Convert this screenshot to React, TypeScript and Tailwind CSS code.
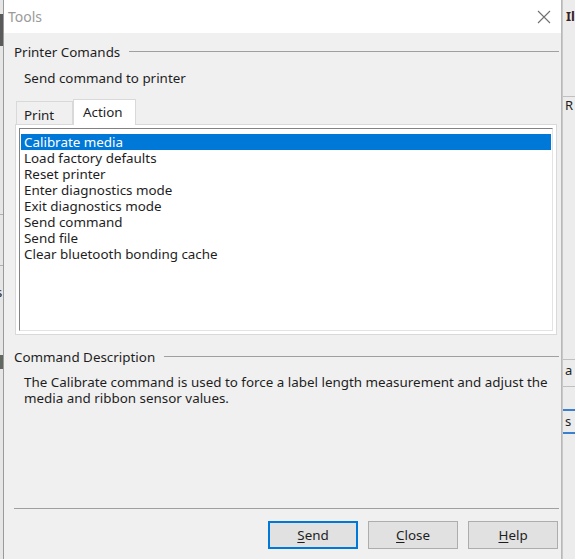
import React from "react";

const actions = [
  "Calibrate media",
  "Load factory defaults",
  "Reset printer",
  "Enter diagnostics mode",
  "Exit diagnostics mode",
  "Send command",
  "Send file",
  "Clear bluetooth bonding cache",
];

const GroupLabel: React.FC<{ label: string }> = ({ label }) => (
  <div className="flex items-center h-[18px]">
    <span className="text-[13.4px] text-[#1e1e1e]">{label}</span>
    <div className="flex-1 ml-[9px] h-[2px] border-t border-[#a0a0a0] border-b-white" />
  </div>
);

const DlgButton: React.FC<{ label: string; accel: string; primary?: boolean }> = ({
  label,
  accel,
  primary,
}) => (
  <button
    className={
      "w-[90px] h-[28px] bg-[#e1e1e1] text-[13.4px] text-[#1e1e1e] " +
      (primary ? "border-2 border-[#0078d7]" : "border border-[#adadad]")
    }
  >
    <span className="underline underline-offset-2">{accel}</span>
    {label.slice(1)}
  </button>
);

export default function App() {
  return (
    <div
      className="w-[575px] h-[559px] flex bg-[#f0f0f0] overflow-hidden"
      style={{ fontFamily: '"Noto Sans", "Open Sans", sans-serif' }}
    >
      {/* left edge of the window behind */}
      <div className="w-[4px] flex flex-col bg-[#e6e6e6] border-r border-[#9a9a9a] text-[13px] leading-none">
        <div className="h-[14px]" />
        <div className="h-[32px] bg-[#5a5a5a] w-[3px]" />
        <div className="h-[168px]" />
        <div className="h-px bg-[#b0b0b0]" />
        <div className="h-[50px]" />
        <div className="h-px bg-[#b0b0b0]" />
        <div className="h-[20px]" />
        <div className="-ml-[4px] text-[#1e1e1e]">s</div>
        <div className="h-[56px]" />
        <div className="h-[14px] bg-[#606860]" />
      </div>

      {/* dialog */}
      <div className="w-[562px] flex flex-col border-r border-[#b8b8b8]">
        <div className="h-[33px] bg-white flex items-center justify-between pl-[4px] pr-[10px]">
          <span className="text-[14px] text-[#9a9a9a]">Tools</span>
          <svg width="14" height="14" viewBox="0 0 14 14" stroke="#707070" strokeWidth="1.1">
            <path d="M1 1 L13 13 M13 1 L1 13" />
          </svg>
        </div>

        <div className="flex-1 flex flex-col pl-[10px] pr-[2px] pt-[10px]">
          <GroupLabel label="Printer Comands" />
          <div className="text-[13.4px] text-[#1e1e1e] pl-[10px] mt-[6px] h-[20px] leading-[22px]">
            Send command to printer
          </div>

          {/* tabs */}
          <div className="mt-[11px] flex items-end h-[26px] pl-[2px]">
            <div className="w-[57px] h-[23px] border border-b-0 border-[#d9d9d9] bg-[#f0f0f0] text-[13.4px] text-[#1e1e1e] pl-[7px] pt-[3px]">
              Print
            </div>
            <div className="w-[63px] h-[26px] border border-b-0 border-[#d9d9d9] bg-white text-[13.4px] text-[#1e1e1e] pl-[9px] pt-[2px] -mb-px z-10">
              Action
            </div>
          </div>
          <div className="ml-[1px] mr-[2px] h-[211px] bg-white border border-[#d9d9d9] p-[3px]">
            <div className="h-full border border-t-[#828282] border-l-[#828282] border-r-[#e3e3e3] border-b-[#e3e3e3] pt-[5px] pl-px pr-px">
              {actions.map((a, i) => (
                <div
                  key={a}
                  className={
                    "h-[16px] leading-[16px] text-[13.4px] pl-[3px] " +
                    (i === 0 ? "bg-[#0078d7] text-white" : "text-[#1e1e1e]")
                  }
                >
                  {a}
                </div>
              ))}
            </div>
          </div>

          <div className="mt-[13px]">
            <GroupLabel label="Command Description" />
          </div>
          <p className="text-[13.4px] leading-[16px] text-[#1e1e1e] pl-[10px] pr-[4px] mt-[8px]">
            The Calibrate command is used to force a label length measurement and adjust the media
            and ribbon sensor values.
          </p>

          <div className="mt-auto h-[2px] border-t border-[#a0a0a0] border-b-white" />
          <div className="flex justify-end gap-[10px] pr-[1px] pt-[11px] pb-[10px]">
            <DlgButton label="Send" accel="S" primary />
            <DlgButton label="Close" accel="C" />
            <DlgButton label="Help" accel="H" />
          </div>
        </div>
      </div>

      {/* right edge of the window behind */}
      <div className="flex-1 flex flex-col bg-[#ececec] border-l border-[#c8c8c8] text-[13px] text-[#1e1e1e] leading-none">
        <div className="h-[10px]" />
        <div className="pl-[3px] font-bold text-[#3a2020]">Il</div>
        <div className="h-[74px] border-b border-[#c0c0c0]" />
        <div className="pl-[2px] mt-[2px]">R</div>
        <div className="h-[248px] border-b border-[#c0c0c0]" />
        <div className="pl-[2px] mt-[4px]">a</div>
        <div className="h-[10px] border-b border-[#c0c0c0]" />
        <div className="h-[24px] border-b-2 border-[#3b7fd0]" />
        <div className="pl-[2px] mt-[4px]">s</div>
        <div className="h-[6px] border-b-2 border-[#3b7fd0]" />
      </div>
    </div>
  );
}
